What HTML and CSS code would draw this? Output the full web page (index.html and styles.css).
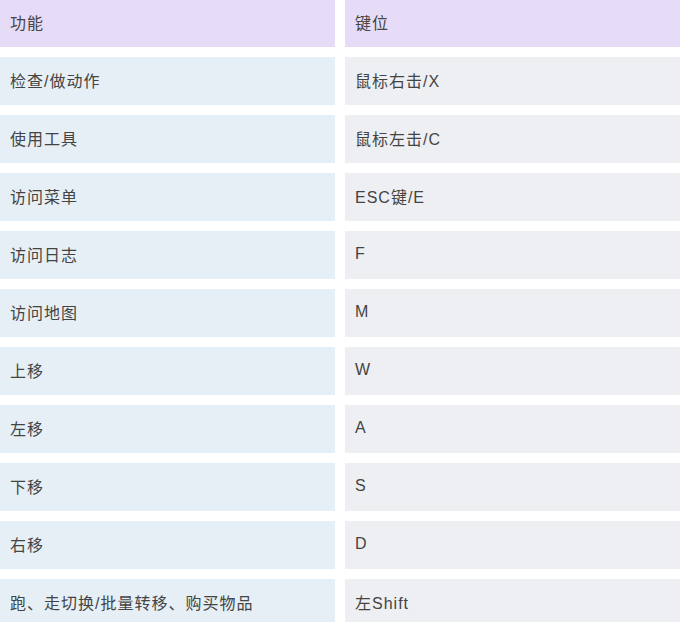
FILE: index.html
```html
<!DOCTYPE html>
<html lang="zh">
<head>
<meta charset="utf-8">
<title>键位</title>
<link rel="stylesheet" href="styles.css">
</head>
<body>
<div class="keys">
  <div class="cell head">功能</div><div class="cell head">键位</div>
  <div class="cell fn">检查/做动作</div><div class="cell key">鼠标右击/X</div>
  <div class="cell fn">使用工具</div><div class="cell key">鼠标左击/C</div>
  <div class="cell fn">访问菜单</div><div class="cell key">ESC键/E</div>
  <div class="cell fn">访问日志</div><div class="cell key">F</div>
  <div class="cell fn">访问地图</div><div class="cell key">M</div>
  <div class="cell fn">上移</div><div class="cell key">W</div>
  <div class="cell fn">左移</div><div class="cell key">A</div>
  <div class="cell fn">下移</div><div class="cell key">S</div>
  <div class="cell fn">右移</div><div class="cell key">D</div>
  <div class="cell fn">跑、走切换/批量转移、购买物品</div><div class="cell key">左Shift</div>
</div>
</body>
</html>
```
FILE: styles.css
```css
html, body {
  margin: 0;
  padding: 0;
  background: #ffffff;
}
.keys {
  display: grid;
  grid-template-columns: 335px 335px;
  grid-auto-rows: 48px;
  grid-template-rows: 47px;
  column-gap: 10px;
  row-gap: 10px;
  font-family: "Liberation Sans", "Noto Sans CJK SC", sans-serif;
  font-size: 16px;
  letter-spacing: 1px;
  color: #444444;
}
.cell {
  display: flex;
  align-items: center;
  padding-left: 10px;
  padding-bottom: 3px;
}
.head {
  background: #e6dcf8;
}
.fn {
  background: #e6eff5;
}
.key {
  background: #eeeff3;
}
```
